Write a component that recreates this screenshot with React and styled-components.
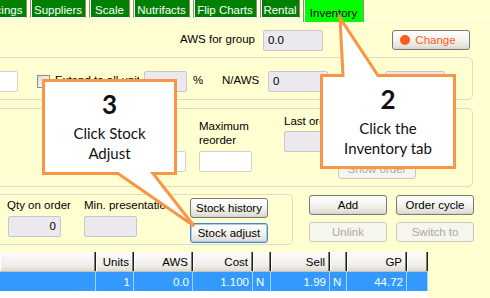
import React from "react";
import styled, { createGlobalStyle, css } from "styled-components";

const YELLOW = "#FFFFD2";
const ORANGE = "#F79646";

const GlobalStyle = createGlobalStyle`
  html, body { margin: 0; padding: 0; background: ${YELLOW}; }
  body {
    font-family: "Liberation Sans", Arial, sans-serif;
    font-size: 11.5px;
    color: #000;
  }
  * { box-sizing: border-box; }
`;

const Screen = styled.div`
  position: relative;
  width: 490px;
  height: 298px;
  overflow: hidden;
  background: ${YELLOW};
  display: flex;
  flex-direction: column;
`;

/* ---------- tabs ---------- */
const TabStrip = styled.div`
  flex: none;
  display: flex;
  align-items: flex-start;
  gap: 3px;
  height: 22px;
  margin-left: -23px;
  border-bottom: 1px solid #f6f6ee;
`;

const Tab = styled.div`
  flex: none;
  width: ${(p) => p.$w}px;
  height: ${(p) => (p.$active ? 22 : 18)}px;
  padding-top: 3px;
  display: flex;
  align-items: center;
  justify-content: center;
  background: ${(p) => (p.$active ? "#00FF00" : "#008000")};
  color: ${(p) => (p.$active ? "#000" : "#fff")};
  border: 1px solid #8c8c8c;
  border-top: none;
  border-bottom: ${(p) => (p.$active ? "none" : "1px solid #fbfbf5")};
  box-shadow: inset 1px 0 0 #ffffff;
  white-space: nowrap;
`;

/* ---------- generic controls ---------- */
const Label = styled.span`
  flex: none;
  display: block;
  margin-left: ${(p) => p.$ml || 0}px;
  width: ${(p) => (p.$w ? `${p.$w}px` : "auto")};
  line-height: 13.5px;
  white-space: nowrap;
  overflow: hidden;
`;

const Field = styled.div`
  flex: none;
  width: ${(p) => p.$w}px;
  height: 21px;
  margin-left: ${(p) => p.$ml || 0}px;
  margin-bottom: ${(p) => p.$mb || 0}px;
  padding: 0 4px;
  display: flex;
  align-items: center;
  justify-content: ${(p) => (p.$right ? "flex-end" : "flex-start")};
  border: 1px solid ${(p) => (p.$disabled ? "#C9C5CD" : "#D2D2C8")};
  border-radius: 2px;
  background: ${(p) => (p.$disabled ? "#EBE8EE" : "#FFFFFF")};
`;

const CheckBox = styled.span`
  flex: none;
  width: 13px;
  height: 13px;
  margin-left: ${(p) => p.$ml || 0}px;
  border: 1px solid #8e8f8f;
  background: linear-gradient(135deg, #dcdcd6, #ffffff);
`;

const Button = styled.button`
  flex: none;
  width: 78px;
  height: 20px;
  margin: 0 0 0 ${(p) => p.$ml || 0}px;
  padding: 0;
  font: inherit;
  color: #000;
  display: flex;
  align-items: center;
  justify-content: center;
  gap: 5px;
  border: 1px solid #787878;
  border-radius: 3px;
  background: linear-gradient(#ffffff 0%, #f5f5f1 45%, #e4e3dc 85%, #d4d3cb 100%);
  ${(p) =>
    p.$accent &&
    css`
      color: #ff5a22;
    `}
  ${(p) =>
    p.$disabled &&
    css`
      border-color: #cbc9be;
      color: #aba99c;
      background: #f6f6ef;
    `}
  ${(p) =>
    p.$focus &&
    css`
      border-color: #4a84c8;
      box-shadow: inset 0 0 0 1px #a9c9f1;
    `}
`;

const Dot = styled.span`
  width: 10px;
  height: 10px;
  border-radius: 50%;
  background: #ff5a1e;
  margin-left: -6px;
`;

/* ---------- sections ---------- */
const HeaderRow = styled.div`
  flex: none;
  height: 35px;
  display: flex;
  align-items: center;
  justify-content: flex-end;
  padding-right: 20px;
  padding-top: 1px;
`;

const Group = styled.div`
  flex: none;
  border: 1px solid #dddbc9;
  border-radius: 5px;
`;

const AwsGroup = styled(Group)`
  height: 43px;
  margin: 0 17px 0 -4px;
  display: flex;
  align-items: center;
  padding-top: 5px;
`;

const ReorderGroup = styled(Group)`
  height: 79px;
  margin: 8px 17px 0 -4px;
  padding: 6px 0 7px;
  display: flex;
  align-items: flex-end;
`;

const FieldColumn = styled.div`
  flex: none;
  display: flex;
  flex-direction: column;
  align-items: flex-start;
  gap: ${(p) => p.$gap || 3}px;
  width: ${(p) => (p.$w ? `${p.$w}px` : "auto")};
  margin-left: ${(p) => p.$ml || 0}px;
  margin-bottom: ${(p) => p.$mb || 0}px;
`;

const LastOrderColumn = styled.div`
  flex: none;
  align-self: stretch;
  width: 132px;
  margin-left: ${(p) => p.$ml || 0}px;
  display: flex;
  flex-direction: column;
  gap: 2px;
  & > button {
    margin-top: auto;
    align-self: flex-end;
  }
`;

const BottomRow = styled.div`
  flex: none;
  height: 51px;
  margin-top: 7px;
  display: flex;
  align-items: flex-start;
`;

const StockGroup = styled(Group)`
  width: 297px;
  height: 51px;
  margin-left: -4px;
  padding: 4px 0 0 10px;
  display: flex;
  align-items: flex-start;
`;

const ButtonStack = styled.div`
  display: flex;
  flex-direction: column;
  gap: 5px;
  margin-top: -1px;
`;

const ActionGrid = styled.div`
  display: grid;
  grid-template-columns: 78px 78px;
  grid-auto-rows: 20px;
  column-gap: 9px;
  row-gap: 7px;
  margin: 1px 0 0 16px;
`;

/* ---------- list grid ---------- */
const COLS = "96px 38px 59px 60px 18px 59px 17px 60px 21px";

const Table = styled.div`
  flex: 1;
  width: 428px;
  margin-top: 7px;
  background: #ffffff;
`;

const HeadRow = styled.div`
  display: grid;
  grid-template-columns: ${COLS};
  height: 20px;
  background: linear-gradient(#fcfcfb, #efeee9 70%, #dcdad2);
  border-bottom: 1px solid #c5c2b6;
`;

const HeadCell = styled.div`
  display: flex;
  align-items: center;
  justify-content: flex-end;
  padding-right: 4px;
  border-right: 1px solid #1e1e1e;
  box-shadow: inset -1px 0 0 #7c7c7c, inset 1px 0 0 #ffffff;
`;

const DataRow = styled.div`
  display: grid;
  grid-template-columns: ${COLS};
  height: 19px;
  background: #3399ff;
  color: #ffffff;
`;

const DataCell = styled.div`
  display: flex;
  align-items: center;
  justify-content: ${(p) => (p.$left ? "flex-start" : "flex-end")};
  padding: 0 3px;
  border-right: 1px solid #a9d1fb;
`;

/* ---------- callouts ---------- */
const Callout = styled.div`
  position: absolute;
  left: ${(p) => p.$x}px;
  top: ${(p) => p.$y}px;
  width: ${(p) => p.$w}px;
  height: ${(p) => p.$h}px;
  z-index: 5;
  display: flex;
  flex-direction: column;
  align-items: center;
  padding-top: 10px;
  font-family: Lato, "Open Sans", sans-serif;
  color: #111;
  text-align: center;
`;

const CalloutShape = styled.svg`
  position: absolute;
  left: 0;
  top: 0;
  overflow: visible;
`;

const StepNumber = styled.div`
  position: relative;
  font-size: 26px;
  font-weight: 700;
  line-height: 30px;
`;

const StepText = styled.div`
  position: relative;
  margin-top: 4px;
  font-size: 15px;
  line-height: 20px;
`;

const TABS = [
  { label: "Pricings", w: 50 },
  { label: "Suppliers", w: 56 },
  { label: "Scale", w: 41 },
  { label: "Nutrifacts", w: 57 },
  { label: "Flip Charts", w: 64 },
  { label: "Rental", w: 40 },
  { label: "Inventory", w: 61, active: true },
];

const HEAD = ["", "Units", "AWS", "Cost", "", "Sell", "", "GP", ""];
const ROW = [
  { v: "" },
  { v: "1" },
  { v: "0.0" },
  { v: "1.100" },
  { v: "N", left: true },
  { v: "1.99" },
  { v: "N", left: true },
  { v: "44.72" },
  { v: "" },
];

function Bubble({ x, y, w, h, path, number, lines }) {
  return (
    <Callout $x={x} $y={y} $w={w} $h={h}>
      <CalloutShape width={w} height={h}>
        <path d={path} fill="#ffffff" stroke={ORANGE} strokeWidth="3" strokeLinejoin="miter" />
      </CalloutShape>
      <StepNumber>{number}</StepNumber>
      <StepText>
        {lines.map((l) => (
          <div key={l}>{l}</div>
        ))}
      </StepText>
    </Callout>
  );
}

export default function App() {
  return (
    <>
      <GlobalStyle />
      <Screen>
        <TabStrip>
          {TABS.map((t) => (
            <Tab key={t.label} $w={t.w} $active={t.active}>
              {t.label}
            </Tab>
          ))}
        </TabStrip>

        <HeaderRow>
          <Label>AWS for group</Label>
          <Field $w={60} $disabled $ml={8}>
            0.0
          </Field>
          <Button $ml={69} $accent>
            <Dot />
            Change
          </Button>
        </HeaderRow>

        <AwsGroup>
          <Field $w={21} />
          <CheckBox $ml={19} />
          <Label $ml={5} $w={84}>
            Extend to all units
          </Label>
          <Field $w={43} $disabled $ml={5} />
          <Label $ml={6} $w={10}>
            %
          </Label>
          <Label $ml={19} $w={42}>
            N/AWS
          </Label>
          <Field $w={60} $disabled $ml={4}>
            0
          </Field>
          <Field $w={60} $disabled $ml={57} />
        </AwsGroup>

        <ReorderGroup>
          <Field $w={53} $ml={136} $mb={7} />
          <FieldColumn $ml={13} $mb={7} $gap={4}>
            <Label>
              Maximum
              <br />
              reorder
            </Label>
            <Field $w={53} />
          </FieldColumn>
          <LastOrderColumn $ml={32}>
            <Label>Last order</Label>
            <Field $w={76} $disabled />
            <Button $disabled>Show order</Button>
          </LastOrderColumn>
        </ReorderGroup>

        <BottomRow>
          <StockGroup>
            <FieldColumn $w={77}>
              <Label>Qty on order</Label>
              <Field $w={53} $disabled $right $ml={1}>
                0
              </Field>
            </FieldColumn>
            <FieldColumn $w={106}>
              <Label>Min. presentation</Label>
              <Field $w={53} $disabled />
            </FieldColumn>
            <ButtonStack>
              <Button>Stock history</Button>
              <Button $focus>Stock adjust</Button>
            </ButtonStack>
          </StockGroup>
          <ActionGrid>
            <Button>Add</Button>
            <Button>Order cycle</Button>
            <Button $disabled>Unlink</Button>
            <Button $disabled>Switch to</Button>
          </ActionGrid>
        </BottomRow>

        <Table>
          <HeadRow>
            {HEAD.map((h, i) => (
              <HeadCell key={i}>{h}</HeadCell>
            ))}
          </HeadRow>
          <DataRow>
            {ROW.map((c, i) => (
              <DataCell key={i} $left={c.left}>
                {c.v}
              </DataCell>
            ))}
          </DataRow>
        </Table>

        <Bubble
          x={42}
          y={79}
          w={135}
          h={96}
          path="M1.5,1.5 H133.5 V94.5 H111 L152,147 L76,94.5 H1.5 Z"
          number="3"
          lines={["Click Stock", "Adjust"]}
        />
        <Bubble
          x={320}
          y={74}
          w={136}
          h={95}
          path="M1.5,1.5 H23 L20,-56 L58,1.5 H134.5 V93.5 H1.5 Z"
          number="2"
          lines={["Click the", "Inventory tab"]}
        />
      </Screen>
    </>
  );
}
